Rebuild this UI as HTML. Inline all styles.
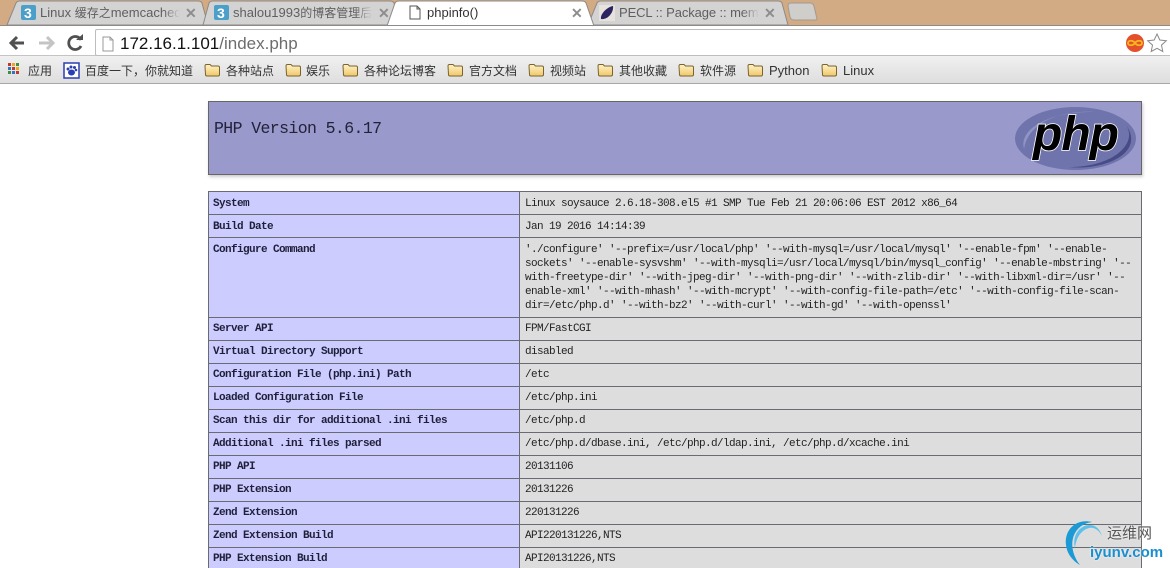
<!DOCTYPE html>
<html><head><meta charset="utf-8"><title>phpinfo()</title>
<style>
html,body{margin:0;padding:0;background:#fff}
#w{position:relative;width:1170px;height:568px;overflow:hidden;background:#fff;font-family:"Liberation Sans","Noto Sans CJK SC",sans-serif}
#w div,#w span.a,#w svg{position:absolute}
.tt{white-space:nowrap;font-size:13px;color:#5f5f5f;top:5px;line-height:16px;overflow:hidden}
.fd{-webkit-mask-image:linear-gradient(90deg,#000 88%,transparent);mask-image:linear-gradient(90deg,#000 88%,transparent)}
.tt span{font-size:12px}
.x{font-size:14px;font-weight:bold;color:#8d8d8d;top:5px;line-height:16px}
.bm{white-space:nowrap;font-size:12px;color:#333;top:63px;line-height:16px}
.c{font-family:"Liberation Mono","Noto Sans CJK SC",monospace;font-size:11px;letter-spacing:-.6px;white-space:pre;line-height:15px;color:#222}
.l{left:209px;width:310px;background:#ccf}
.r{left:520px;width:621px;background:#ddd}
.hl{left:208px;width:934px;height:1px;background:#6a6a72}
.lb{left:213px;font-weight:bold;color:#1f1f3a}
.v{left:525px}
</style></head><body><div id="w">
<div style="left:0;top:0;width:1170px;height:25px;background:#d2aa83"></div>
<svg style="left:0;top:0" width="830" height="26" viewBox="0 0 830 26">
<path d="M7 25 L16 3 Q17 1 20 1 H198 Q201 1 202 3 L208 25Z" fill="#d3d3d3" stroke="#8f8a84"/>
<path d="M203 25 L209 3 Q210 1 213 1 H390 Q393 1 394 3 L400 25Z" fill="#d3d3d3" stroke="#8f8a84"/>
<path d="M588 25 L597 3 Q598 1 601 1 H778 Q781 1 782 3 L788 25Z" fill="#d3d3d3" stroke="#8f8a84"/>
<path d="M387 26 L395 3 Q396 1 399 1 H582 Q585 1 586 3 L594 26Z" fill="#fff" stroke="#8f8a84"/>
<path d="M788 6 Q788 3 791 3 H810 Q813 3 814 6 L817 19 Q817 20 815 20 H794 Q791 20 790 17Z" fill="#d0cecb" stroke="#a29a90"/>
<rect x="21" y="5" width="15" height="15" rx="2" fill="#4c9fc8"/><text x="24" y="18" font-size="14" font-weight="bold" fill="#fff" font-family="Liberation Sans">3</text>
<rect x="214" y="5" width="15" height="15" rx="2" fill="#4c9fc8"/><text x="217" y="18" font-size="14" font-weight="bold" fill="#fff" font-family="Liberation Sans">3</text>
<path d="M410 6h7l3 3v10h-10zM417 6v3h3" fill="#fff" stroke="#555"/>
<rect x="599" y="5" width="16" height="16" fill="#e8e2dc"/><path d="M601 19 C600 14 607 7 613 6 C614 12 608 20 601 19Z" fill="#2b2460"/>
</svg>
<div class="tt fd" style="left:40px;width:140px">Linux <span>缓存之</span>memcached</div>
<div class="x" style="left:185px">✕</div>
<div class="tt fd" style="left:233px;width:139px">shalou1993<span>的博客管理后</span></div>
<div class="x" style="left:378px">✕</div>
<div class="tt" style="left:427px;color:#333">phpinfo()</div>
<div class="x" style="left:571px">✕</div>
<div class="tt fd" style="left:619px;width:140px;letter-spacing:-.1px">PECL :: Package :: memc</div>
<div class="x" style="left:764px">✕</div>

<div style="left:0;top:25px;width:1170px;height:30px;background:#fff;border-top:1px solid #8c8a88;box-sizing:border-box"></div>
<div style="left:0;top:55px;width:1170px;height:29px;background:linear-gradient(#f0f0f0,#dedede);border-top:1px solid #c4c4c4;border-bottom:1px solid #a8a8a8;box-sizing:border-box"></div>
<div style="left:95px;top:29px;width:1075px;height:27px;background:#fff;border:1px solid #bdbdbd;border-right:0;border-radius:2px 0 0 2px;box-sizing:border-box"></div>
<svg style="left:0;top:28px" width="125" height="30" viewBox="0 0 125 30">
<path d="M24 15H12M17 9l-6 6 6 6" fill="none" stroke="#505050" stroke-width="3"/>
<path d="M39 15H52M47 9l6 6-6 6" fill="none" stroke="#c4c4c4" stroke-width="3"/>
<path d="M81 12a6.500 6.500 0 1 0 0 6" fill="none" stroke="#505050" stroke-width="2.800"/><path d="M76 12h7v-6z" fill="#505050"/>
<path d="M103 9h7l3 3v11h-10zM110 9v3h3" fill="#fff" stroke="#9a9a9a"/>
</svg>
<div style="left:120px;top:34px;font-size:17px;line-height:20px;white-space:nowrap;color:#111">172.16.1.101<span style="color:#6d6d6d">/index.php</span></div>
<svg style="left:1124px;top:30px" width="46" height="26" viewBox="0 0 46 26">
<circle cx="11" cy="13" r="9" fill="#e4502c"/><path d="M11 13c-2-3-7-3-7 0s5 3 7 0c2-3 7-3 7 0s-5 3-7 0z" fill="none" stroke="#f5b81e" stroke-width="1.800"/>
<path d="M33 4l2.800 6 6.500.7-4.800 4.400 1.300 6.400-5.800-3.200-5.800 3.200 1.300-6.400-4.800-4.400 6.500-.7z" fill="#fff" stroke="#8a8a8a"/>
</svg>

<svg style="left:0;top:60px" width="880" height="20" viewBox="0 0 880 20">
<g fill="#c0392b"><rect x="8" y="3" width="3" height="3"/></g><g fill="#e8a820"><rect x="12" y="3" width="3" height="3"/></g><g fill="#3f8f3f"><rect x="16" y="3" width="3" height="3"/></g>
<g fill="#3a70c0"><rect x="8" y="7" width="3" height="3"/></g><g fill="#c0392b"><rect x="12" y="7" width="3" height="3"/></g><g fill="#e8a820"><rect x="16" y="7" width="3" height="3"/></g>
<g fill="#3f8f3f"><rect x="8" y="11" width="3" height="3"/></g><g fill="#3a70c0"><rect x="12" y="11" width="3" height="3"/></g><g fill="#c0392b"><rect x="16" y="11" width="3" height="3"/></g>
<rect x="64" y="3" width="15" height="15" fill="#fff" stroke="#2a3fb0" stroke-width="1.500"/><g fill="#2a3fb0"><ellipse cx="71.500" cy="12.500" rx="3.500" ry="3"/><circle cx="68" cy="9" r="1.500"/><circle cx="71" cy="7" r="1.500"/><circle cx="74.500" cy="7.500" r="1.500"/><circle cx="76" cy="10" r="1.300"/></g>
<defs><linearGradient id="f" x1="0" y1="0" x2="0" y2="1"><stop offset="0" stop-color="#fff3c8"/><stop offset="1" stop-color="#f0c66a"/></linearGradient>
<path id="d" d="M0 3q0-1.500 1.500-1.500h3.500l1.500 1.500h6.500q1.500 0 1.500 1.500v7q0 1.500-1.500 1.500h-11q-1.500 0-1.500-1.500z" fill="url(#f)" stroke="#7a6330"/></defs>
<use href="#d" x="205" y="3"/><use href="#d" x="286" y="3"/><use href="#d" x="343" y="3"/><use href="#d" x="448" y="3"/><use href="#d" x="529" y="3"/><use href="#d" x="598" y="3"/><use href="#d" x="679" y="3"/><use href="#d" x="748" y="3"/><use href="#d" x="822" y="3"/>
</svg>
<div class="bm" style="left:28px">应用</div>
<div class="bm" style="left:85px">百度一下，你就知道</div>
<div class="bm" style="left:226px">各种站点</div>
<div class="bm" style="left:306px">娱乐</div>
<div class="bm" style="left:364px">各种论坛博客</div>
<div class="bm" style="left:469px">官方文档</div>
<div class="bm" style="left:550px">视频站</div>
<div class="bm" style="left:619px">其他收藏</div>
<div class="bm" style="left:700px">软件源</div>
<div class="bm" style="left:769px;font-size:13px">Python</div>
<div class="bm" style="left:843px;font-size:13px">Linux</div>

<div style="left:208px;top:101px;width:934px;height:74px;background:#99c;border:1px solid #666;box-sizing:border-box;box-shadow:1px 2px 3px #ccc"></div>
<div style="left:214px;top:119px;font-family:'Liberation Mono',monospace;font-size:16.500px;letter-spacing:-.6px;line-height:20px;color:#22223a;white-space:pre">PHP Version 5.6.17</div>
<svg style="left:1014px;top:105px" width="124" height="66" viewBox="0 0 124 66">
<ellipse cx="61.500" cy="33.500" rx="60.500" ry="31.500" fill="#6f75ac"/>
<path d="M10 44C4 22 40 6 80 7C50 5 14 16 10 44Z" fill="#8f94c4"/>
<path d="M112 20C124 38 100 62 55 62C90 66 132 48 112 20Z" fill="#484b86"/>
<text x="19" y="45" font-family="Liberation Sans" font-size="48" font-weight="bold" font-style="italic" fill="#000" stroke="#fff" stroke-width="1.600" paint-order="stroke" letter-spacing="-1">php</text>
</svg>

<div class="l" style="top:191px;height:377px"></div>
<div class="r" style="top:191px;height:377px"></div>
<div style="left:208px;top:191px;width:1px;height:377px;background:#6a6a72"></div>
<div style="left:519px;top:191px;width:1px;height:377px;background:#6a6a72"></div>
<div style="left:1141px;top:191px;width:1px;height:377px;background:#6a6a72"></div>
<div class="hl" style="top:191px"></div><div class="hl" style="top:214px"></div><div class="hl" style="top:237px"></div><div class="hl" style="top:317px"></div><div class="hl" style="top:340px"></div><div class="hl" style="top:363px"></div><div class="hl" style="top:386px"></div><div class="hl" style="top:409px"></div><div class="hl" style="top:432px"></div><div class="hl" style="top:455px"></div><div class="hl" style="top:478px"></div><div class="hl" style="top:501px"></div><div class="hl" style="top:524px"></div><div class="hl" style="top:547px"></div>

<div class="c lb" style="top:197px">System</div><div class="c v" style="top:197px">Linux soysauce 2.6.18-308.el5 #1 SMP Tue Feb 21 20:06:06 EST 2012 x86_64</div>
<div class="c lb" style="top:220px">Build Date</div><div class="c v" style="top:220px">Jan 19 2016 14:14:39</div>
<div class="c lb" style="top:243px">Configure Command</div>
<div class="c v" style="top:243px;line-height:14px">'./configure' '--prefix=/usr/local/php' '--with-mysql=/usr/local/mysql' '--enable-fpm' '--enable-
sockets' '--enable-sysvshm' '--with-mysqli=/usr/local/mysql/bin/mysql_config' '--enable-mbstring' '--
with-freetype-dir' '--with-jpeg-dir' '--with-png-dir' '--with-zlib-dir' '--with-libxml-dir=/usr' '--
enable-xml' '--with-mhash' '--with-mcrypt' '--with-config-file-path=/etc' '--with-config-file-scan-
dir=/etc/php.d' '--with-bz2' '--with-curl' '--with-gd' '--with-openssl'</div>
<div class="c lb" style="top:322px">Server API</div><div class="c v" style="top:322px">FPM/FastCGI</div>
<div class="c lb" style="top:345px">Virtual Directory Support</div><div class="c v" style="top:345px">disabled</div>
<div class="c lb" style="top:368px">Configuration File (php.ini) Path</div><div class="c v" style="top:368px">/etc</div>
<div class="c lb" style="top:391px">Loaded Configuration File</div><div class="c v" style="top:391px">/etc/php.ini</div>
<div class="c lb" style="top:414px">Scan this dir for additional .ini files</div><div class="c v" style="top:414px">/etc/php.d</div>
<div class="c lb" style="top:437px">Additional .ini files parsed</div><div class="c v" style="top:437px">/etc/php.d/dbase.ini, /etc/php.d/ldap.ini, /etc/php.d/xcache.ini</div>
<div class="c lb" style="top:460px">PHP API</div><div class="c v" style="top:460px">20131106</div>
<div class="c lb" style="top:483px">PHP Extension</div><div class="c v" style="top:483px">20131226</div>
<div class="c lb" style="top:506px">Zend Extension</div><div class="c v" style="top:506px">220131226</div>
<div class="c lb" style="top:529px">Zend Extension Build</div><div class="c v" style="top:529px">API220131226,NTS</div>
<div class="c lb" style="top:552px">PHP Extension Build</div><div class="c v" style="top:552px">API20131226,NTS</div>

<svg style="left:1062px;top:518px" width="50" height="50" viewBox="0 0 50 50">
<path d="M30 4C14 0 2 12 4 27c1 9 7 16 14 20C10 37 8 24 13 15 17 8 23 5 30 4Z" fill="#1b9ad6"/>
<path d="M13 30C10 18 17 8 27 7c6-.5 11 4 13 11-3-6-8-9-13-8-8 2-13 10-14 20Z" fill="#5cc0ea"/>
</svg>
<div style="left:1107px;top:525px;font-size:15px;line-height:18px;color:#555;white-space:nowrap;text-shadow:0 0 2px #fff">运维网</div>
<div style="left:1090px;top:544px;font-size:15px;font-weight:bold;line-height:18px;color:#1a8fd0;white-space:nowrap;text-shadow:0 0 2px #fff">iyunv.com</div>
</div></body></html>
